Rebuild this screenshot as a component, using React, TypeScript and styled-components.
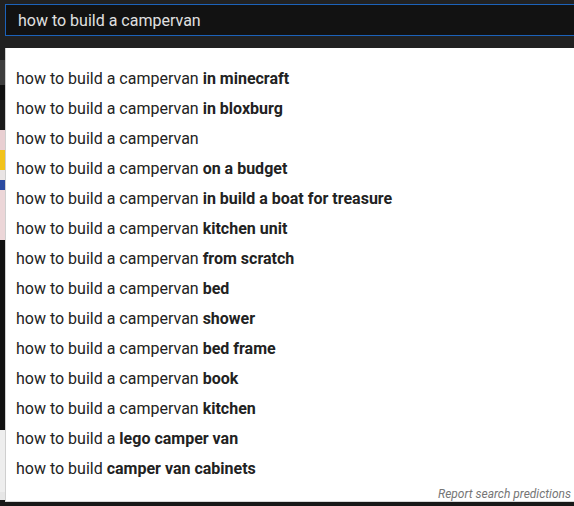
import styled, { createGlobalStyle } from "styled-components";

const GlobalStyle = createGlobalStyle`
    html, body {
        margin: 0;
        padding: 0;
        background: #181818;
        font-family: Roboto, "Liberation Sans", Arial, sans-serif;
    }
`;

const Page = styled.div`
    position: relative;
    width: 574px;
    height: 506px;
    overflow: hidden;
    background: #181818;
`;

const Masthead = styled.div`
    height: 48px;
    background: #212121;
    padding: 4px 0 0 5px;
    box-sizing: border-box;
`;

const SearchBox = styled.div`
    display: flex;
    align-items: center;
    height: 32px;
    box-sizing: border-box;
    background: #121212;
    border: 1px solid #1c62b9;
    border-right: none;
    padding-left: 12px;
    color: #e0e0e0;
    font-size: 16px;
`;

const Feed = styled.div`
    display: flex;
    flex-direction: column;
`;

const Block = styled.div<{ $h: number; $bg: string }>`
    height: ${(p) => p.$h}px;
    background: ${(p) => p.$bg};
`;

const ThumbRow = styled.div`
    display: flex;
    height: 8px;
`;

const Thumb = styled.div<{ $w: number; $bg: string }>`
    width: ${(p) => p.$w}px;
    background: ${(p) => p.$bg};
`;

const Dropdown = styled.div`
    position: absolute;
    top: 48px;
    left: 5px;
    right: 0;
    height: 454px;
    box-sizing: border-box;
    background: #fff;
    border-left: 1px solid #cfcfcf;
    border-bottom: 1px solid #d6d6d6;
    padding-top: 15px;
    display: flex;
    flex-direction: column;
`;

const Suggestion = styled.div`
    height: 30px;
    display: flex;
    align-items: center;
    padding-left: 10px;
    font-size: 16px;
    color: #222;
    white-space: pre;
    b {
        font-weight: 700;
    }
`;

const Report = styled.div`
    margin-top: auto;
    margin-bottom: -2px;
    height: 18px;
    text-align: right;
    padding-right: 3px;
    font-size: 12px;
    font-style: italic;
    color: #767676;
    line-height: 18px;
`;

const prefix = "how to build a campervan";

const suggestions: [string, string][] = [
    [prefix + " ", "in minecraft"],
    [prefix + " ", "in bloxburg"],
    [prefix, ""],
    [prefix + " ", "on a budget"],
    [prefix + " ", "in build a boat for treasure"],
    [prefix + " ", "kitchen unit"],
    [prefix + " ", "from scratch"],
    [prefix + " ", "bed"],
    [prefix + " ", "shower"],
    [prefix + " ", "bed frame"],
    [prefix + " ", "book"],
    [prefix + " ", "kitchen"],
    ["how to build a ", "lego camper van"],
    ["how to build ", "camper van cabinets"],
];

const feedBlocks: [number, string][] = [
    [12, "#212121"],
    [25, "#3d3d3d"],
    [15, "#0f0f0f"],
    [30, "#1a1a1a"],
    [20, "#e9cfd2"],
    [20, "#f2c31c"],
    [10, "#e9e4e4"],
    [10, "#2b4aa0"],
    [50, "#ecd6d8"],
    [190, "#111111"],
    [62, "#eeeeee"],
];

const thumbs: [number, string][] = [
    [48, "#e6e6e6"],
    [60, "#2a2a2a"],
    [50, "#3a3a3a"],
    [40, "#8a2b2b"],
    [70, "#1e1e1e"],
    [60, "#5a5a5a"],
    [50, "#222"],
    [40, "#141414"],
    [60, "#333"],
    [40, "#9a1c1c"],
    [56, "#4a4a4a"],
];

const App = () => {
    return (
        <Page>
            <GlobalStyle />
            <Masthead>
                <SearchBox>{prefix}</SearchBox>
            </Masthead>
            <Feed>
                {feedBlocks.map(([h, bg], i) => (
                    <Block key={i} $h={h} $bg={bg} />
                ))}
                <ThumbRow>
                    {thumbs.map(([w, bg], i) => (
                        <Thumb key={i} $w={w} $bg={bg} />
                    ))}
                </ThumbRow>
            </Feed>
            <Dropdown>
                {suggestions.map(([plain, bold], i) => (
                    <Suggestion key={i}>
                        {plain}
                        {bold && <b>{bold}</b>}
                    </Suggestion>
                ))}
                <Report>Report search predictions</Report>
            </Dropdown>
        </Page>
    );
};

export default App;
